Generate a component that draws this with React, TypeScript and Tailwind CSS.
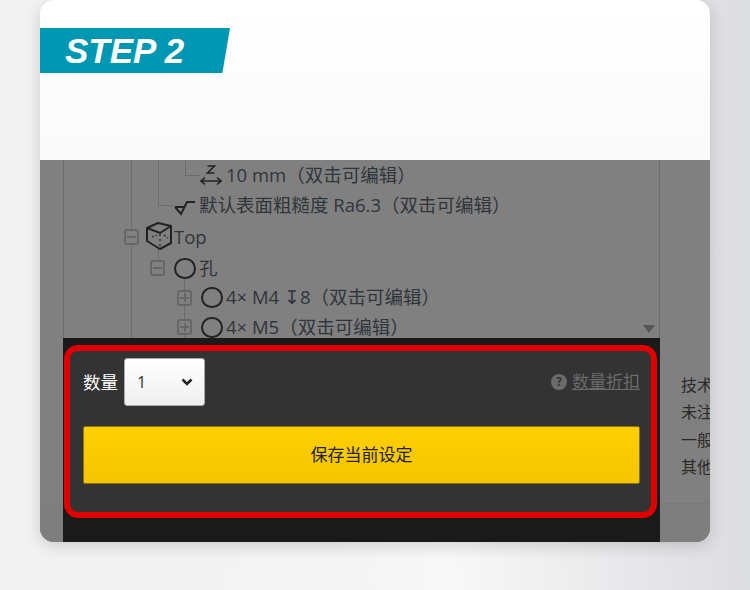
import React from 'react';

const FONT = { fontFamily: '"Open Sans", "Noto Sans CJK SC", sans-serif' };

// 树节点的展开/收起按钮
function Toggle({ open }: { open?: boolean }) {
  return (
    <span className="w-[15px] h-[16px] shrink-0 rounded-[3px] border-2 border-[#666] bg-[#808080] flex items-center justify-center relative z-10">
      <span className="absolute w-[9px] h-[2px] bg-[#666]" />
      {!open && <span className="absolute w-[2px] h-[9px] bg-[#666]" />}
    </span>
  );
}

function Circle() {
  return <span className="w-[22px] h-[21px] shrink-0 rounded-full border-[2.5px] border-[#222] bg-[#808080] relative z-10" />;
}

function Cube() {
  return (
    <svg width="27" height="29" viewBox="0 0 27 29" fill="none" stroke="#222" strokeWidth="2" className="shrink-0 relative z-10">
      <path d="M1 6 L12 1 L25 4 L25 21 L14 27 L1 19 Z" strokeLinejoin="round" />
      <path d="M1 6 L14 11 L25 4" />
      <path d="M14 12 V27" strokeDasharray="2 3" strokeWidth="1.3" />
      <path d="M6 15 L11 13 M18 13 L22 16" strokeDasharray="2 2" strokeWidth="1.3" />
    </svg>
  );
}

function DimIcon() {
  return (
    <span className="w-[22px] h-[24px] shrink-0 relative z-10">
      <svg width="22" height="24" viewBox="0 0 22 24" fill="none" stroke="#222">
        <path d="M7.5 3 H14.5 L7.5 10 H14.5" strokeWidth="1.6" />
        <path d="M1 18 H21 M5 14.5 L1 18 L5 21.5 M17 14.5 L21 18 L17 21.5" strokeWidth="1.6" />
      </svg>
    </span>
  );
}

function RoughIcon() {
  return (
    <svg width="22" height="18" viewBox="0 0 22 18" fill="none" stroke="#222" strokeWidth="2" className="shrink-0 relative z-10 mt-[3px]">
      <path d="M1 9 H11 M1 9 L7 16 L13 4 H21" />
    </svg>
  );
}

function Row({ indent, height, children }: { indent: string; height: string; children: React.ReactNode }) {
  return <div className={`flex items-center whitespace-nowrap text-[18.5px] leading-none text-[#30353a] ${indent} ${height}`}>{children}</div>;
}

export default function App() {
  return (
    <div className="w-[750px] h-[590px] overflow-hidden bg-[linear-gradient(90deg,#f2f2f2_0%,#f4f4f4_45%,#f8f8f8_60%,#dcdde0_100%)]" style={FONT}>
      <div className="ml-10 w-[670px] h-[542px] rounded-[14px] overflow-hidden flex flex-col shadow-[0_4px_16px_rgba(0,0,0,0.16)]">
        {/* 顶部白色区域 */}
        <div className="h-[160px] shrink-0 bg-[linear-gradient(180deg,#ffffff,#fafafa)] pt-[28px]">
          <div className="w-[190px] h-[45px] bg-[#0097b2] [clip-path:polygon(0_0,100%_0,96%_100%,0_100%)] pl-[25px] pt-px flex items-center">
            <span className="text-[35px] font-bold italic text-white" style={{ fontFamily: '"Liberation Sans", sans-serif' }}>STEP 2</span>
          </div>
        </div>

        <div className="flex-1 flex bg-[#808080]">
          <div className="w-[23px] shrink-0 flex flex-col">
            <div className="h-[345px]" />
            <div className="flex-1 border-t border-[#7a7a7a] bg-[#7e7e7e]" />
          </div>

          <div className="w-[597px] shrink-0 flex flex-col">
            {/* 树形列表 */}
            <div className="relative h-[178px] overflow-hidden border-x border-[#6c6c6c]">
              <span className="absolute left-[67px] top-0 h-full w-px bg-[#6c6c6c]" />
              <span className="absolute left-[94px] top-0 h-[45px] w-px bg-[#6c6c6c]" />
              <span className="absolute left-[94px] top-[45px] w-[16px] h-px bg-[#6c6c6c]" />
              <span className="absolute left-[121px] top-0 h-[15px] w-px bg-[#6c6c6c]" />
              <span className="absolute left-[121px] top-[15px] w-[15px] h-px bg-[#6c6c6c]" />
              <span className="absolute left-[94px] top-[86px] h-[22px] w-px bg-[#6c6c6c]" />
              <span className="absolute left-[120px] top-[116px] h-[62px] w-px bg-[#6c6c6c]" />

              <Row indent="pl-[136px]" height="h-[30px]"><DimIcon /><span className="ml-[4px]">10 mm（双击可编辑）</span></Row>
              <Row indent="pl-[110px]" height="h-[30px]"><RoughIcon /><span className="ml-[3px]">默认表面粗糙度 Ra6.3（双击可编辑）</span></Row>
              <Row indent="pl-[60px]" height="h-[33px]"><Toggle open /><span className="ml-[7px] flex items-center"><Cube /></span><span className="ml-px pt-px">Top</span></Row>
              <Row indent="pl-[86px]" height="h-[30px]"><Toggle open /><span className="ml-[9px] flex"><Circle /></span><span className="ml-[3px]">孔</span></Row>
              <Row indent="pl-[113px]" height="h-[29px]"><Toggle /><span className="ml-[9px] flex"><Circle /></span><span className="ml-[3px]">4× M4 ↧8（双击可编辑）</span></Row>
              <Row indent="pl-[113px]" height="h-[30px]"><Toggle /><span className="ml-[9px] flex"><Circle /></span><span className="ml-[3px]">4× M5（双击可编辑）</span></Row>

              <span className="absolute left-[579px] top-[165px] w-0 h-0 border-x-[6px] border-x-transparent border-t-[8px] border-t-[#555]" />
            </div>

            {/* 底部操作栏 */}
            <div className="flex-1 bg-[#1a1a1a] pt-[7px] pl-px pr-[3px]">
              <div className="h-[173px] rounded-[14px] border-[6px] border-[#e00000] bg-[#333] pl-[13px] pr-[11px] pt-[7px]">
                <div className="flex items-center h-[48px]">
                  <span className="text-[17.5px] text-white">数量</span>
                  <div className="ml-[6px] w-[81px] h-[48px] rounded-[3px] bg-[linear-gradient(180deg,#ffffff,#efefef)] border border-[#aaa] flex items-center justify-between pl-[12px] pr-[11px]">
                    <span className="text-[16px] text-[#333]">1</span>
                    <svg width="12" height="8" viewBox="0 0 12 8" fill="none" stroke="#222" strokeWidth="2.6"><path d="M1.5 1.5 L6 6 L10.5 1.5" /></svg>
                  </div>
                  <div className="ml-auto flex items-center gap-[5px] text-[#6b6b6b]">
                    <span className="w-[16px] h-[16px] rounded-full bg-[#6b6b6b] flex items-center justify-center text-[12px] font-bold leading-none text-[#333]">?</span>
                    <span className="text-[17px] underline">数量折扣</span>
                  </div>
                </div>
                <div className="mt-[20px] h-[58px] rounded-[2px] bg-[linear-gradient(180deg,#ffd000,#f5c400)] border border-[#8a7410] flex items-center justify-center text-[17px] text-[#222]">
                  保存当前设定
                </div>
              </div>
            </div>
          </div>

          {/* 右侧说明，文字在卡片边缘被裁切 */}
          <div className="flex-1 min-w-0 flex flex-col overflow-hidden">
            <div className="h-[343px] pl-[21px] pt-[212px] text-[16px] leading-[27.3px] text-[#2a2a2a] whitespace-nowrap">
              <div>技术</div>
              <div>未注</div>
              <div>一般</div>
              <div>其他</div>
            </div>
            <div className="flex-1 border-t border-[#7a7a7a] bg-[#7e7e7e]" />
          </div>
        </div>
      </div>
    </div>
  );
}
